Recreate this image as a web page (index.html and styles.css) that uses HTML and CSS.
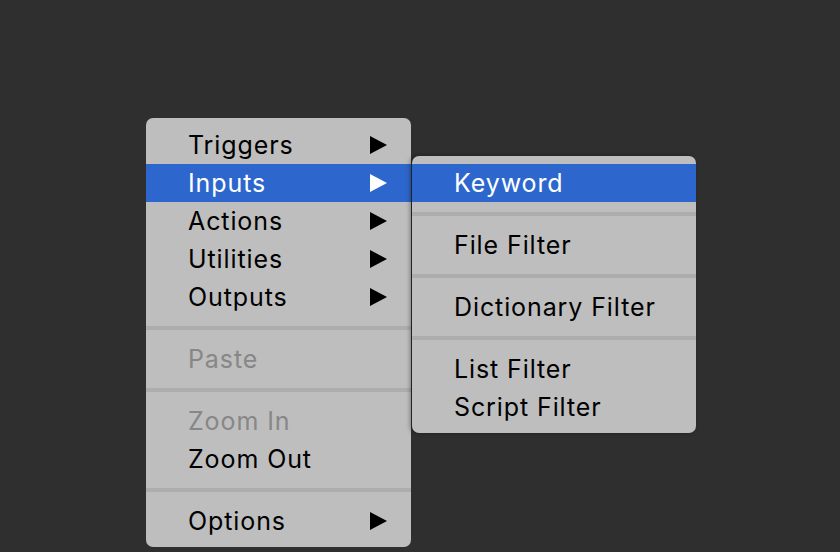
FILE: index.html
```html
<!DOCTYPE html>
<html>
<head>
<meta charset="utf-8">
<link rel="stylesheet" href="styles.css">
</head>
<body>
<div class="menu main-menu">
  <div class="item"><span class="label">Triggers</span><span class="arrow"></span></div>
  <div class="item active"><span class="label">Inputs</span><span class="arrow"></span></div>
  <div class="item"><span class="label">Actions</span><span class="arrow"></span></div>
  <div class="item"><span class="label">Utilities</span><span class="arrow"></span></div>
  <div class="item"><span class="label">Outputs</span><span class="arrow"></span></div>
  <div class="sep"></div>
  <div class="item disabled"><span class="label">Paste</span></div>
  <div class="sep"></div>
  <div class="item disabled"><span class="label">Zoom In</span></div>
  <div class="item"><span class="label">Zoom Out</span></div>
  <div class="sep"></div>
  <div class="item"><span class="label">Options</span><span class="arrow"></span></div>
</div>
<div class="menu sub-menu">
  <div class="item active"><span class="label">Keyword</span></div>
  <div class="sep"></div>
  <div class="item"><span class="label">File Filter</span></div>
  <div class="sep"></div>
  <div class="item"><span class="label">Dictionary Filter</span></div>
  <div class="sep"></div>
  <div class="item"><span class="label">List Filter</span></div>
  <div class="item"><span class="label">Script Filter</span></div>
</div>
</body>
</html>
```
FILE: styles.css
```css
html, body {
  margin: 0;
  padding: 0;
  width: 840px;
  height: 552px;
  overflow: hidden;
  background: #2f2f2f;
}
body {
  position: relative;
  font-family: Inter, "Liberation Sans", sans-serif;
}
.menu {
  position: absolute;
  display: flex;
  flex-direction: column;
  background: #bebebe;
  border-radius: 7px;
  padding: 8px 0 7px;
  box-sizing: border-box;
}
.main-menu {
  left: 146px;
  top: 118px;
  width: 265px;
}
.sub-menu {
  left: 412px;
  top: 156px;
  width: 284px;
  box-shadow: -2px 0 4px rgba(0,0,0,0.35);
}
.item {
  height: 38px;
  display: flex;
  align-items: center;
  justify-content: space-between;
  padding: 0 24px 0 42px;
  font-size: 25px;
  letter-spacing: 0.9px;
  color: #000;
  line-height: 38px;
}
.label {
  position: relative;
  top: 0;
}
.item.active {
  background: #2d67cd;
  color: #fff;
}
.item.disabled {
  color: #878787;
}
.arrow {
  width: 0;
  height: 0;
  border-top: 9px solid transparent;
  border-bottom: 9px solid transparent;
  border-left: 17px solid #000;
}
.item.active .arrow {
  border-left-color: #fff;
}
.sep {
  height: 24px;
  display: flex;
  align-items: center;
}
.sep::before {
  content: "";
  display: block;
  width: 100%;
  height: 4px;
  background: #adadad;
}
```
